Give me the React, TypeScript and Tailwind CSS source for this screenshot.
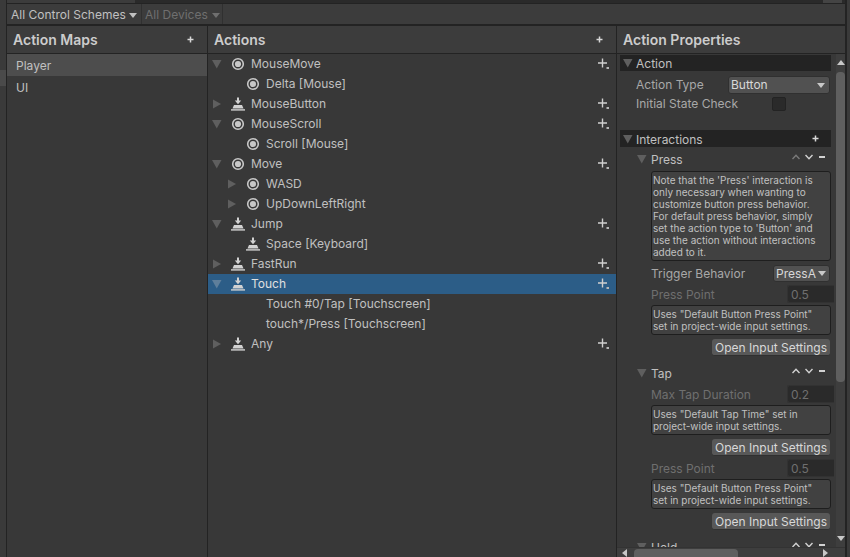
const font = { fontFamily: "Inter, 'Noto Sans', sans-serif" };

function Tri({ dir, color = "#5f5f5f" }: { dir: "down" | "right"; color?: string }) {
  return (
    <svg width="12" height="12" viewBox="0 0 12 12" className="shrink-0">
      {dir === "down" ? <path d="M1 2h9.5l-4.75 8.5z" fill={color} /> : <path d="M2 1.5l8 4.5-8 4.5z" fill={color} />}
    </svg>
  );
}

function Circle() {
  return (
    <svg width="14" height="14" viewBox="0 0 14 14" className="shrink-0">
      <circle cx="7" cy="7" r="5.3" fill="none" stroke="#c8c8c8" strokeWidth="1.6" />
      <circle cx="7" cy="7" r="3.1" fill="#c8c8c8" />
    </svg>
  );
}

function Btn() {
  return (
    <svg width="14" height="14" viewBox="0 0 14 14" className="shrink-0">
      <path d="M6 0.5h2v3h2.2L7 7.2 3.8 3.5H6z" fill="#d2d2d2" />
      <path d="M3 8h8l1.5 3.5h-11z" fill="#d2d2d2" />
      <rect x="0" y="12.2" width="14" height="1.4" fill="#d2d2d2" />
    </svg>
  );
}

function AddBinding() {
  return (
    <svg width="13" height="13" viewBox="0 0 13 13" className="shrink-0">
      <path d="M4.5 0.5v9M0 5h9" stroke="#cfcfcf" strokeWidth="1.4" />
      <rect x="8.5" y="9" width="2.5" height="2" fill="#b5b5b5" />
    </svg>
  );
}

type Row = { label: string; level: 0 | 1; tri?: "down" | "right"; icon?: "c" | "b"; add?: boolean; sel?: boolean };
const rows: Row[] = [
  { label: "MouseMove", level: 0, tri: "down", icon: "c", add: true },
  { label: "Delta [Mouse]", level: 1, icon: "c" },
  { label: "MouseButton", level: 0, tri: "right", icon: "b", add: true },
  { label: "MouseScroll", level: 0, tri: "down", icon: "c", add: true },
  { label: "Scroll [Mouse]", level: 1, icon: "c" },
  { label: "Move", level: 0, tri: "down", icon: "c", add: true },
  { label: "WASD", level: 1, tri: "right", icon: "c" },
  { label: "UpDownLeftRight", level: 1, tri: "right", icon: "c" },
  { label: "Jump", level: 0, tri: "down", icon: "b", add: true },
  { label: "Space [Keyboard]", level: 1, icon: "b" },
  { label: "FastRun", level: 0, tri: "right", icon: "b", add: true },
  { label: "Touch", level: 0, tri: "down", icon: "b", add: true, sel: true },
  { label: "Touch #0/Tap [Touchscreen]", level: 1 },
  { label: "touch*/Press [Touchscreen]", level: 1 },
  { label: "Any", level: 0, tri: "right", icon: "b", add: true },
];

function ActionRow({ r }: { r: Row }) {
  return (
    <div className={`h-5 flex items-center pr-[5px] ${r.sel ? "bg-[#2c5d87] text-[#e0e0e0]" : "text-[#c0c0c0]"}`}>
      <div className={`flex items-center ${r.level === 0 ? "pl-[3px]" : "pl-[18px]"}`}>
        <div className="w-3 h-3">{r.tri && <Tri dir={r.tri} color={r.sel ? "#5f7f9b" : "#5f5f5f"} />}</div>
        <div className="w-[14px] h-[14px] ml-[8px] shrink-0">
          {r.icon === "c" && <Circle />}
          {r.icon === "b" && <Btn />}
        </div>
        <span className="ml-[6px]">{r.label}</span>
      </div>
      <div className="ml-auto h-[13px]">{r.add && <AddBinding />}</div>
    </div>
  );
}

function Plus() {
  return (
    <svg width="7" height="7" viewBox="0 0 7 7" className="shrink-0">
      <path d="M3.5 0.5v6M0.5 3.5h6" stroke="#d8d8d8" strokeWidth="1.5" />
    </svg>
  );
}

function Caret({ color }: { color: string }) {
  return (
    <svg width="8" height="5" viewBox="0 0 8 5" className="shrink-0">
      <path d="M0 0h8L4 5z" fill={color} />
    </svg>
  );
}

function Controls({ dimUp }: { dimUp?: boolean }) {
  return (
    <div className="ml-auto flex items-center mb-[4px]">
      <svg width="8" height="6" viewBox="0 0 8 6"><path d="M0.5 5L4 1.2 7.5 5" fill="none" stroke={dimUp ? "#7a7a7a" : "#d2d2d2"} strokeWidth="1.4" /></svg>
      <svg className="ml-[5px]" width="8" height="6" viewBox="0 0 8 6"><path d="M0.5 1L4 4.8 7.5 1" fill="none" stroke="#d2d2d2" strokeWidth="1.4" /></svg>
      <div className="ml-[6px] w-[6px] h-[2px] bg-[#d2d2d2]" />
    </div>
  );
}

function Help({ lines }: { lines: string[] }) {
  return (
    <div className="ml-[31px] mt-[2px] border border-[#1e1e1e] rounded-[3px] bg-[#414141] px-[1px] py-[2px] text-[10px] leading-[12px] text-[#c0c0c0] whitespace-nowrap overflow-hidden">
      {lines.map((l) => <div key={l}>{l}</div>)}
    </div>
  );
}

function OpenBtn() {
  return (
    <div className="flex justify-end mr-[1px] mt-[4px]">
      <div className="h-[17px] w-[118px] pt-[2px] rounded-[3px] bg-[#585858] border-b border-[#303030] flex items-center justify-center text-[12px] text-[#d8d8d8] whitespace-nowrap">Open Input Settings</div>
    </div>
  );
}

function NumField({ label, value, top }: { label: string; value: string; top: string }) {
  return (
    <div className={`h-[18px] flex items-center ml-[31px] mr-[-3px] text-[#6f6f6f] ${top}`}>
      <span className="pt-[2px]">{label}</span>
      <div className="ml-auto w-[47px] h-[18px] pt-[2px] bg-[#2a2a2a] rounded-l-[3px] border-l border-y border-[#323232] pl-[3px] flex items-center text-[#6f6f6f]">{value}</div>
    </div>
  );
}

function InteractionHead({ label, dimUp, top }: { label: string; dimUp?: boolean; top: string }) {
  return (
    <div className={`h-[20px] shrink-0 flex items-center pl-[16px] pr-[6px] text-[#c0c0c0] ${top}`}>
      <Tri dir="down" />
      <span className="ml-[3px] pt-[2px]">{label}</span>
      <Controls dimUp={dimUp} />
    </div>
  );
}

function PanelHeader({ title, plus }: { title: string; plus?: boolean }) {
  return (
    <div className="h-[28px] shrink-0 flex items-center pl-[6px] pr-[13px] border-b border-[#232323] bg-[#3c3c3c] text-[14px] font-semibold text-[#cccccc] whitespace-nowrap">
      {title}
      {plus && <div className="ml-auto"><Plus /></div>}
    </div>
  );
}

export default function App() {
  return (
    <div style={font} className="w-[850px] h-[557px] overflow-hidden bg-[#383838] flex text-[12px] text-[#c0c0c0]">
      <div className="w-[7px] shrink-0 bg-[#3a3a3a] border-r border-[#232323] pt-[70px]">
        <div className="h-[16px] bg-[#4a4a4a]" />
      </div>
      <div className="w-[838px] shrink-0 flex flex-col">
        <div className="h-[4px] shrink-0 flex border-b border-[#232323]">
          <div className="w-[128px] bg-[#3c3c3c]" />
          <div className="flex-1 bg-[#2a2a2a]" />
          <div className="w-[19px] bg-[#444444]" />
          <div className="w-[3px] bg-[#2a2a2a]" />
        </div>
        <div className="h-[22px] shrink-0 flex items-center border-b-2 border-[#232323] bg-[#3c3c3c]">
          <div className="h-full w-[135px] flex items-center gap-[3px] pl-[4px] pt-[2px] border-r border-[#303030] text-[#c0c0c0] whitespace-nowrap">
            All Control Schemes
            <Caret color="#c0c0c0" />
          </div>
          <div className="h-full w-[81px] flex items-center gap-[4px] pl-[3px] pt-[2px] border-r border-[#303030] text-[#6f6f6f] whitespace-nowrap">
            All Devices
            <Caret color="#6f6f6f" />
          </div>
        </div>
        <div className="flex-1 min-h-0 flex">
          <div className="w-[201px] shrink-0 border-r border-[#232323]">
            <PanelHeader title="Action Maps" plus />
            <div className="h-[22px] flex items-center pl-[9px] pt-[2px] bg-[#4d4d4d]">Player</div>
            <div className="h-[22px] flex items-center pl-[9px] pt-[2px]">UI</div>
          </div>
          <div className="w-[409px] shrink-0 border-r border-[#232323]">
            <PanelHeader title="Actions" plus />
            <div>
              {rows.map((r) => <ActionRow key={r.label} r={r} />)}
            </div>
          </div>
          <div className="flex-1 min-w-0 flex flex-col">
            <PanelHeader title="Action Properties" />
            <div className="flex-1 min-h-0 flex">
              <div className="w-[219px] shrink-0 overflow-hidden pl-[3px] pr-[5px] pt-[1px]">
                <div className="h-[16px] bg-[#232323] flex items-center pl-[2px]">
                  <Tri dir="down" /><span className="ml-[2px] pt-[2px]">Action</span>
                </div>
                <div className="h-[18px] mt-[5px] flex items-center pl-[16px] pr-[1px] text-[#a8a8a8]">
                  <span>Action Type</span>
                  <div className="ml-auto w-[102px] h-[18px] rounded-[3px] bg-[#515151] border border-[#303030] flex items-center pl-[2px] pr-[4px] text-[#d8d8d8]">
                    Button
                    <div className="ml-auto"><Caret color="#c8c8c8" /></div>
                  </div>
                </div>
                <div className="h-[18px] mt-[1px] flex items-center pl-[16px] text-[#a8a8a8]">
                  <span className="w-[136px] whitespace-nowrap">Initial State Check</span>
                  <div className="w-[14px] h-[14px] rounded-[2px] bg-[#2a2a2a] border border-[#232323]" />
                </div>
                <div className="h-[17px] mt-[17px] bg-[#232323] flex items-center pl-[2px] pr-[12px]">
                  <Tri dir="down" /><span className="ml-[2px] pt-[2px]">Interactions</span>
                  <div className="ml-auto"><Plus /></div>
                </div>
                <InteractionHead label="Press" dimUp top="mt-[2px]" />
                <Help lines={["Note that the 'Press' interaction is", "only necessary when wanting to", "customize button press behavior.", "For default press behavior, simply", "set the action type to 'Button' and", "use the action without interactions", "added to it."]} />
                <div className="h-[17px] mt-[4px] flex items-center ml-[31px] mr-[1px] text-[#a8a8a8]">
                  <span>Trigger Behavior</span>
                  <div className="ml-auto w-[57px] h-[17px] rounded-[3px] bg-[#515151] border border-[#303030] flex items-center pl-[2px] pr-[3px] text-[#d8d8d8]">
                    <span className="whitespace-nowrap">PressA</span>
                    <div className="ml-auto"><Caret color="#c8c8c8" /></div>
                  </div>
                </div>
                <NumField label="Press Point" value="0.5" top="mt-[3px]" />
                <Help lines={['Uses "Default Button Press Point"', "set in project-wide input settings."]} />
                <OpenBtn />
                <InteractionHead label="Tap" top="mt-[7px]" />
                <NumField label="Max Tap Duration" value="0.2" top="mt-[2px]" />
                <Help lines={['Uses "Default Tap Time" set in', "project-wide input settings."]} />
                <OpenBtn />
                <NumField label="Press Point" value="0.5" top="mt-[3px]" />
                <Help lines={['Uses "Default Button Press Point"', "set in project-wide input settings."]} />
                <OpenBtn />
                <InteractionHead label="Hold" top="mt-[7px]" />
              </div>
              <div className="w-[9px] shrink-0 bg-[#3e3e3e] flex flex-col items-center pt-[6px] pb-[6px]">
                <svg width="8" height="5" viewBox="0 0 8 5" className="shrink-0"><path d="M4 0l4 5H0z" fill="#c8c8c8" /></svg>
                <div className="mt-[7px] w-[9px] h-[310px] shrink-0 rounded-[4px] bg-[#5f5f5f]" />
                <svg width="8" height="5" viewBox="0 0 8 5" className="shrink-0 mt-auto"><path d="M0 0h8L4 5z" fill="#c8c8c8" /></svg>
              </div>
            </div>
            <div className="h-[10px] shrink-0 bg-[#3e3e3e] border-t border-[#333333] flex items-center pl-[5px] pr-[17px]">
              <svg width="5" height="8" viewBox="0 0 5 8" className="shrink-0"><path d="M0 4l5-4v8z" fill="#c8c8c8" /></svg>
              <div className="ml-[7px] w-[104px] h-[8px] mt-[1px] rounded-t-[4px] bg-[#5f5f5f]" />
              <svg className="ml-auto shrink-0" width="5" height="8" viewBox="0 0 5 8"><path d="M5 4L0 0v8z" fill="#c8c8c8" /></svg>
            </div>
          </div>
        </div>
      </div>
      <div className="w-[2px] shrink-0 bg-[#232323]" />
      <div className="flex-1 bg-[#3a3a3a]" />
    </div>
  );
}
